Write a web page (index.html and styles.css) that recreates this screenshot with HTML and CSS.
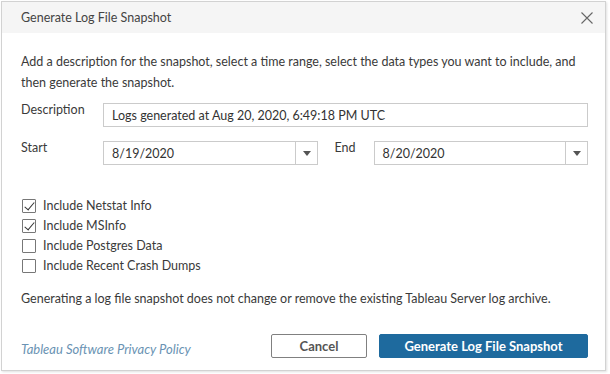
FILE: index.html
```html
<!DOCTYPE html>
<html>
<head>
<meta charset="utf-8">
<link rel="stylesheet" href="styles.css">
</head>
<body>
<div class="dialog">
  <div class="header">
    <span class="title">Generate Log File Snapshot</span>
    <svg class="close" width="12" height="12" viewBox="0 0 12 12"><path d="M0.5 0.5 L11.5 11.5 M11.5 0.5 L0.5 11.5" stroke="#666" stroke-width="1.1" fill="none"/></svg>
  </div>
  <div class="body">
    <p class="intro">Add a description for the snapshot, select a time range, select the data types you want to include, and then generate the snapshot.</p>
    <div class="row">
      <label class="lbl">Description</label>
      <div class="field text">Logs generated at Aug 20, 2020, 6:49:18 PM UTC</div>
    </div>
    <div class="row">
      <label class="lbl">Start</label>
      <div class="field select"><span class="val">8/19/2020</span><span class="arrow"></span></div>
      <label class="lbl end">End</label>
      <div class="field select"><span class="val">8/20/2020</span><span class="arrow"></span></div>
    </div>
    <div class="checks">
      <div class="check"><span class="box on"></span>Include Netstat Info</div>
      <div class="check"><span class="box on"></span>Include MSInfo</div>
      <div class="check"><span class="box"></span>Include Postgres Data</div>
      <div class="check"><span class="box"></span>Include Recent Crash Dumps</div>
    </div>
    <p class="note">Generating a log file snapshot does not change or remove the existing Tableau Server log archive.</p>
    <div class="footer">
      <a class="link">Tableau Software Privacy Policy</a>
      <div class="buttons">
        <button class="btn cancel">Cancel</button>
        <button class="btn primary">Generate Log File Snapshot</button>
      </div>
    </div>
  </div>
</div>
</body>
</html>
```
FILE: styles.css
```css
* { box-sizing: border-box; }
html, body { margin: 0; padding: 0; background: #fff; }
body {
  padding: 1px 4px 3px 1px;
  font-family: Lato, "Open Sans", sans-serif;
  font-size: 12.5px;
  color: #333;
}
.dialog {
  width: 605px;
  height: 370px;
  border: 1px solid #d2d2d2;
  box-shadow: 1px 1px 2px rgba(0,0,0,0.12);
  background: #fff;
  display: flex;
  flex-direction: column;
}
.header {
  height: 31px;
  background: #f5f5f5;
  display: flex;
  align-items: center;
  justify-content: space-between;
  padding: 0 12px 0 19px;
  flex: none;
}
.title { color: #444; font-size: 12.5px; }
.close { display: block; }
.body {
  padding: 18px 17px 12px 19px;
  flex: 1;
  display: flex;
  flex-direction: column;
}
.intro { margin: 0; line-height: 21px; color: #3a3a3a; }
.row { display: flex; align-items: flex-start; margin-top: 10px; }
.row + .row { margin-top: 14px; }
.lbl { width: 82px; flex: none; line-height: 14px; color: #3a3a3a; }
.lbl.end { width: 39px; margin-left: 17px; }
.field {
  flex: 1;
  height: 24px;
  border: 1px solid #cbcbcb;
  display: flex;
  align-items: center;
  padding-top: 1px;
  color: #333;
}
.text { padding-left: 8px; }
.select .val { flex: 1; padding-left: 8px; }
.select .arrow {
  width: 22px;
  height: 22px;
  margin-top: -1px;
  border-left: 1px solid #cbcbcb;
  position: relative;
}
.select .arrow::after {
  content: "";
  position: absolute;
  left: 7px;
  top: 9px;
  border-left: 4px solid transparent;
  border-right: 4px solid transparent;
  border-top: 5px solid #555;
}
.checks { margin-top: 30px; display: flex; flex-direction: column; }
.check { display: flex; align-items: center; height: 20px; color: #3a3a3a; }
.box {
  width: 14px; height: 14px;
  border: 1px solid #777;
  border-radius: 1px;
  margin: 2px 7px 0 1px;
  position: relative;
  flex: none;
}
.box.on::after {
  content: "";
  position: absolute;
  left: 4px;
  top: 0px;
  width: 4px;
  height: 9px;
  border-right: 1.2px solid #333;
  border-bottom: 1.2px solid #333;
  transform: rotate(40deg);
}
.note { margin: 15px 0 0; line-height: 18px; color: #3a3a3a; }
.footer {
  margin-top: auto;
  display: flex;
  justify-content: space-between;
  align-items: center;
}
.link { font-style: italic; font-size: 13px; color: #6a93b3; padding-top: 6px; }
.buttons { display: flex; gap: 12px; }
.btn {
  font-family: Lato, "Open Sans", sans-serif;
  font-size: 13px;
  font-weight: bold;
  height: 24px;
  border-radius: 2px;
  padding: 0;
}
.cancel {
  width: 96px;
  background: #fff;
  border: 1px solid #808080;
  color: #555;
}
.primary {
  width: 209px;
  background: #1e6a9e;
  border: 1px solid #1e6a9e;
  color: #fff;
}
```
